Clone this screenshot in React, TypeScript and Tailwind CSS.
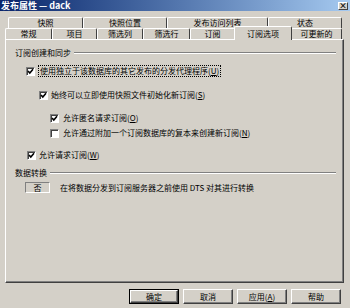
import React from 'react'

const font = { fontFamily: '"Noto Sans CJK SC", "Liberation Sans", sans-serif' }

function Check({ checked }: { checked: boolean }) {
  return (
    <div className="w-[9px] h-[9px] bg-white border-t border-l border-[#808080] border-r border-b border-r-white border-b-white shadow-[inset_1px_1px_0_#404040] flex items-center justify-center shrink-0">
      {checked && (
        <svg width="7" height="7" viewBox="0 0 7 7">
          <path d="M1 3 L2.8 5 L6 1.2" fill="none" stroke="#000" strokeWidth="1.6" />
        </svg>
      )}
    </div>
  )
}

function Label({ text, k }: { text: string; k: string }) {
  return (
    <span>
      {text}(<span className="underline">{k}</span>)
    </span>
  )
}

function Tab({ label, w, selected }: { label: string; w: number; selected?: boolean }) {
  return (
    <div
      style={{ width: w }}
      className={`flex items-center justify-center border-t border-l border-white border-r border-r-[#404040] rounded-t-[2px] text-[8px] leading-none ${
        selected ? 'h-[14px] -mb-[1px] relative z-10 bg-[#d4d0c8] -mx-[1px]' : 'h-full'
      }`}
    >
      {label}
    </div>
  )
}

function Btn({ children, def }: { children: React.ReactNode; def?: boolean }) {
  return (
    <div className={`w-[50px] h-[15px] ${def ? 'border border-black' : ''}`}>
      <div className="w-full h-full border-t border-l border-white border-r border-b border-r-[#404040] border-b-[#404040] shadow-[inset_-1px_-1px_0_#808080] flex items-center justify-center text-[8px] leading-none">
        {children}
      </div>
    </div>
  )
}

export default function App() {
  return (
    <div style={font} className="w-[350px] h-[308px] bg-[#d4d0c8] text-black overflow-hidden flex flex-col">
      {/* Title bar */}
      <div className="h-[11px] bg-gradient-to-r from-[#0a246a] to-[#a6caf0] flex items-center justify-between pl-[1px] pr-[2px]">
        <span className="text-white font-bold text-[9px] leading-none">发布属性 — dack</span>
        <div className="w-[10px] h-[8px] bg-[#d4d0c8] border-t border-l border-white border-r border-b border-r-[#404040] border-b-[#404040] flex items-center justify-center text-[8px] leading-none font-bold">
          ×
        </div>
      </div>

      {/* Tabs */}
      <div className="mt-[6px] flex flex-col">
        <div className="flex h-[11px] ml-[8px]">
          <Tab label="快照" w={75} />
          <Tab label="快照位置" w={84} />
          <Tab label="发布访问列表" w={101} />
          <Tab label="状态" w={74} />
        </div>
        <div className="flex items-end h-[11px] ml-[5px]">
          <Tab label="常规" w={47} />
          <Tab label="项目" w={45} />
          <Tab label="筛选列" w={46} />
          <Tab label="筛选行" w={47} />
          <Tab label="订阅" w={45} />
          <Tab label="订阅选项" w={58} selected />
          <Tab label="可更新的" w={51} />
        </div>
      </div>

      {/* Panel */}
      <div className="ml-[5px] w-[339px] h-[244px] border-t border-l border-white border-r border-b border-r-[#404040] border-b-[#404040] shadow-[inset_-1px_-1px_0_#808080] text-[8px] leading-[10px] flex flex-col pr-[7px]">
        <div className="mt-[8px] ml-[9px] flex items-center gap-[3px]">
          <span>订阅创建和同步</span>
          <div className="flex-1 h-[2px] border-t border-[#808080] border-b border-b-white" />
        </div>

        <div className="mt-[7px] ml-[20px] flex items-center gap-[3px]">
          <Check checked />
          <span className="border border-dotted border-black px-[1px]">
            <Label text="使用独立于该数据库的其它发布的分发代理程序" k="U" />
          </span>
        </div>

        <div className="mt-[13px] ml-[33px] flex items-center gap-[3px]">
          <Check checked />
          <Label text="始终可以立即使用快照文件初始化新订阅" k="S" />
        </div>

        <div className="mt-[13px] ml-[44px] flex items-center gap-[4px]">
          <Check checked />
          <Label text="允许匿名请求订阅" k="O" />
        </div>

        <div className="mt-[5px] ml-[44px] flex items-center gap-[4px]">
          <Check checked={false} />
          <Label text="允许通过附加一个订阅数据库的复本来创建新订阅" k="N" />
        </div>

        <div className="mt-[12px] ml-[21px] flex items-center gap-[3px]">
          <Check checked />
          <Label text="允许请求订阅" k="W" />
        </div>

        <div className="mt-[8px] ml-[9px] flex items-center gap-[3px]">
          <span>数据转换</span>
          <div className="flex-1 h-[2px] border-t border-[#808080] border-b border-b-white" />
        </div>

        <div className="mt-[4px] ml-[19px] flex items-center gap-[10px]">
          <div className="w-[25px] h-[11px] border-t border-l border-[#808080] border-r border-b border-r-white border-b-white flex items-center justify-center leading-none">
            否
          </div>
          <span>在将数据分发到订阅服务器之前使用 DTS 对其进行转换</span>
        </div>
      </div>

      {/* Buttons */}
      <div className="mt-[6px] ml-[129px] flex gap-[4px]">
        <Btn def>确定</Btn>
        <Btn>取消</Btn>
        <Btn>
          应用(<span className="underline">A</span>)
        </Btn>
        <Btn>帮助</Btn>
      </div>
    </div>
  )
}
